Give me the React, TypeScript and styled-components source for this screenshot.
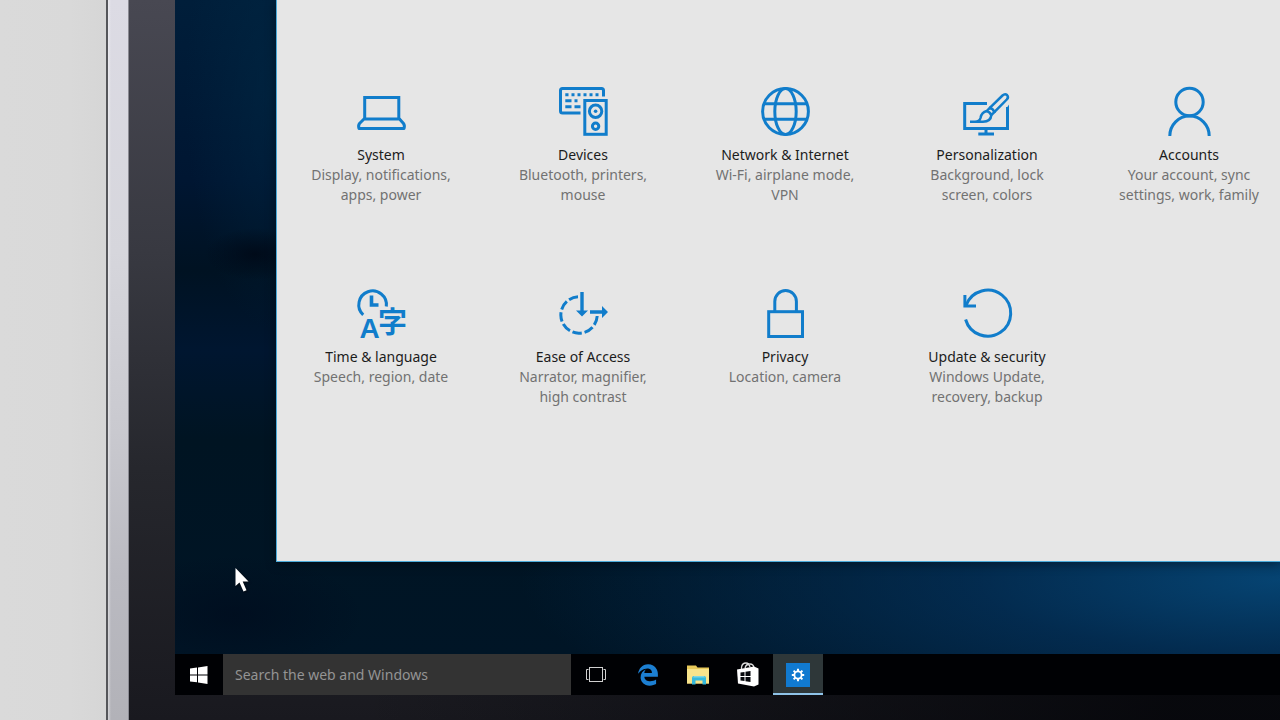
import React from "react";
import styled, { createGlobalStyle } from "styled-components";
import { FaEdgeLegacy } from "react-icons/fa";

const fontStack = '"Noto Sans", "Open Sans", "Noto Sans CJK JP", sans-serif';

const GlobalStyle = createGlobalStyle`
  *, *::before, *::after { box-sizing: border-box; }
  body { margin: 0; font-family: ${fontStack}; background: #d9d9d9; }
`;

const Scene = styled.div`
  position: relative;
  display: flex;
  min-height: 100vh;
  overflow: hidden;
  padding-left: 106px;
  background: linear-gradient(90deg, #dadada 0, #d9d9d9 70px, #d6d6d6 104px);
`;

const MetalEdge = styled.div`
  flex: none;
  width: 23px;
  border-left: 2px solid #55565a;
  border-right: 1px solid #8a8a92;
  background:
    linear-gradient(90deg, rgba(255, 255, 255, 0.45) 0, rgba(255, 255, 255, 0) 3px),
    linear-gradient(180deg, #dcdbe4 0%, #d6d6dc 35%, #c9c9cf 60%, #babac1 80%, #b2b2b8 100%);
`;

const Bezel = styled.div`
  flex: 1;
  min-width: 0;
  display: flex;
  padding: 0 0 25px 46px;
  background:
    linear-gradient(90deg, rgba(3, 4, 8, 0) 0, rgba(3, 4, 8, 0) 20%, rgba(3, 4, 8, 0.8) 90%),
    linear-gradient(180deg, #484852 0%, #383941 35%, #26272d 65%, #19191f 100%);
`;

const Screen = styled.div`
  flex: 1;
  min-width: 0;
  display: flex;
  flex-direction: column;
`;

const Desktop = styled.main`
  flex: 1;
  padding: 0 0 91px 101px;
  background:
    radial-gradient(ellipse 50px 26px at 80px 254px, rgba(0, 6, 18, 0.7), rgba(0, 6, 18, 0) 100%),
    radial-gradient(ellipse 90px 240px at 100px 90px, rgba(0, 40, 68, 0.6), rgba(0, 40, 68, 0) 100%),
    radial-gradient(ellipse 760px 190px at 100% 580px, rgba(6, 70, 118, 0.95), rgba(4, 52, 96, 0.7) 40%, rgba(2, 30, 60, 0) 100%),
    radial-gradient(ellipse 130px 60px at 60px 615px, rgba(0, 8, 26, 0.5), rgba(0, 8, 26, 0) 100%),
    linear-gradient(180deg, #001e3a 0, #001632 180px, #001222 270px, #001630 350px, #001422 440px, #001526 655px);
`;

const SettingsWindow = styled.section`
  padding: 87px 0 154px 28px;
  border-left: 1px solid #4cabda;
  border-bottom: 1px solid #4cabda;
  background: #e6e6e6;
  box-shadow: 0 2px 10px rgba(0, 0, 0, 0.4);
`;

const CategoryGrid = styled.nav`
  display: grid;
  grid-template-columns: repeat(auto-fill, 152px);
  gap: 84px 50px;
`;

const Tile = styled.a`
  display: flex;
  flex-direction: column;
  align-items: center;
  color: #727272;
  font-size: 14px;
  line-height: 20px;
  text-align: center;
  text-decoration: none;
`;

const TileIcon = styled.svg`
  width: 49px;
  height: 49px;
  margin-bottom: 9px;
  overflow: visible;
  fill: none;
  stroke: #117dcb;
  stroke-width: 3;
`;

const SolidText = styled.text`
  fill: #117dcb;
  stroke: none;
  font-weight: 700;
`;

const TileName = styled.span`
  color: #1c1c1c;
`;

const Taskbar = styled.footer`
  display: flex;
  height: 41px;
  background: #000104;
`;

const TaskButton = styled.button<{ $width?: number; $active?: boolean }>`
  flex: none;
  display: flex;
  align-items: center;
  justify-content: center;
  width: ${(p) => p.$width ?? 50}px;
  padding: ${(p) => (p.$active ? "2px 0 0" : "0")};
  border: 0;
  border-bottom: ${(p) => (p.$active ? "2px solid #8fc3e8" : "0")};
  background: ${(p) => (p.$active ? "#2e3739" : "transparent")};
  color: #fff;
`;

const TaskViewButton = styled(TaskButton)`
  padding-right: 2px;
`;

const SearchBox = styled.input`
  flex: none;
  width: 348px;
  padding: 0 12px;
  border: 0;
  background: #333333;
  color: #ddd;
  font-family: ${fontStack};
  font-size: 14px;
  &::placeholder { color: #949494; opacity: 1; }
`;

const SettingsBadge = styled.span`
  display: flex;
  align-items: center;
  justify-content: center;
  width: 24px;
  height: 24px;
  background: #117ad0;
`;

const Cursor = styled.svg`
  position: absolute;
  left: 235px;
  top: 567px;
  width: 14px;
  height: 26px;
  filter: drop-shadow(1px 1px 1px rgba(0, 0, 0, 0.6));
`;

const categories: { name: string; detail: string; icon: React.ReactNode }[] = [
  {
    name: "System",
    detail: "Display, notifications, apps, power",
    icon: (
      <>
        <path d="M7.7 32V10.5H41.8V32" />
        <path d="M7 32H42.500L46.500 36.500Q48 38.500 47 41.500H2Q1 38.500 2.500 36.500Z" strokeLinejoin="round" />
      </>
    ),
  },
  {
    name: "Devices",
    detail: "Bluetooth, printers, mouse",
    icon: (
      <>
        <path d="M21.500 26H3.500Q1.500 26 1.500 24V3.500Q1.500 1.500 3.500 1.500H42.500Q44.500 1.500 44.500 3.500V9.500" />
        <path d="M6.300 7.800H9.500M12.500 7.800H15.500M18.500 7.800H21.500M24.500 7.800H27.500M30.500 7.800H33.500M36.500 7.800H39.500M6.300 13.800H12.500M15.500 13.800H18.500M6.300 19.800H12.500M15.500 19.800H21.500" />
        <rect x="25.800" y="13.500" width="21.400" height="33.800" />
        <circle cx="36.600" cy="24.300" r="6.200" />
        <circle cx="36.600" cy="24.300" r="1.800" fill="#117dcb" stroke="none" />
        <circle cx="36.600" cy="39.300" r="3.200" />
      </>
    ),
  },
  {
    name: "Network & Internet",
    detail: "Wi-Fi, airplane mode, VPN",
    icon: (
      <>
        <circle cx="24.500" cy="24.500" r="22.900" />
        <ellipse cx="24.500" cy="24.500" rx="10.700" ry="22.900" />
        <path d="M3 16.700H46M3 32.200H46" />
      </>
    ),
  },
  {
    name: "Personalization",
    detail: "Background, lock screen, colors",
    icon: (
      <>
        <path d="M24 16.500H1.700V41.500H44.500V20" />
        <path d="M43 22L46 17.500V24Z" fill="#117dcb" stroke="none" />
        <path d="M23 42V46M15.300 47H31" />
        <g strokeWidth="2.500">
          <path d="M26.800 20.800L39.500 8.500Q42 6.200 44 8Q46 10.200 43.800 12.500L31.300 25.200" />
          <path d="M26.800 20.800Q30 21.500 31.300 25.200L28.300 28.200Q26.800 24.800 23.800 24Z" />
          <path d="M23.800 24C19 25 18 28 17.500 31Q16.500 34.700 12 34.700H7M12 34.700H20C25 34.700 28 32.500 28.300 28.200" />
        </g>
      </>
    ),
  },
  {
    name: "Accounts",
    detail: "Your account, sync settings, work, family",
    icon: (
      <>
        <circle cx="24.500" cy="15" r="13.700" />
        <path d="M4.800 49A19.700 20 0 0 1 44.200 49" />
      </>
    ),
  },
  {
    name: "Time & language",
    detail: "Speech, region, date",
    icon: (
      <>
        <path d="M6.200 25.800A13.800 13.800 0 1 1 29.300 17.500" />
        <path d="M14.500 6.500V16H21.500" strokeWidth="3.600" />
        <SolidText x="2.500" y="48.500" fontSize="28" fontFamily="Liberation Sans">A</SolidText>
        <SolidText x="21" y="43.500" fontSize="29" fontFamily="Noto Sans CJK JP">字</SolidText>
      </>
    ),
  },
  {
    name: "Ease of Access",
    detail: "Narrator, magnifier, high contrast",
    icon: (
      <>
        <path d="M38.200 27A18.200 18.200 0 1 1 19 7.800" pathLength="86" strokeDasharray="9.800 2.900" />
        <path d="M23 3V24M31 23H44" strokeWidth="3.400" />
        <path d="M17 21.500H29L23 27.500ZM43 17L49 23L43 29Z" fill="#117dcb" stroke="none" />
      </>
    ),
  },
  {
    name: "Privacy",
    detail: "Location, camera",
    icon: (
      <>
        <rect x="7.700" y="22.700" width="33.800" height="24.800" />
        <path d="M13.800 22V12.500A10.800 11 0 0 1 35.400 12.500V22" />
      </>
    ),
  },
  {
    name: "Update & security",
    detail: "Windows Update, recovery, backup",
    icon: (
      <>
        <path d="M2.600 30.500A23 23 0 1 0 3.200 16" />
        <path d="M1.900 6V16.900H13" />
      </>
    ),
  },
];

const gearAngles = [0, 45, 90, 135, 180, 225, 270, 315];

export default function App() {
  return (
    <>
      <GlobalStyle />
      <Scene>
        <MetalEdge />
        <Bezel>
          <Screen>
            <Desktop>
              <SettingsWindow aria-label="Settings">
                <CategoryGrid>
                  {categories.map((c) => (
                    <Tile href="#" key={c.name}>
                      <TileIcon viewBox="0 0 49 49" aria-hidden="true">{c.icon}</TileIcon>
                      <TileName>{c.name}</TileName>
                      <span>{c.detail}</span>
                    </Tile>
                  ))}
                </CategoryGrid>
              </SettingsWindow>
            </Desktop>
            <Taskbar>
              <TaskButton $width={48} aria-label="Start">
                <svg width="18" height="18" viewBox="0 0 18 18" fill="#fff">
                  <path d="M0 2.600L7 1.600V8.500H0ZM8 1.400L17.500 0V8.500H8ZM0 9.500H7V16.300L0 15.400ZM8 9.500H17.500V18L8 16.500Z" />
                </svg>
              </TaskButton>
              <SearchBox type="text" placeholder="Search the web and Windows" aria-label="Search the web and Windows" />
              <TaskViewButton $width={52} aria-label="Task View">
                <svg width="20" height="16" viewBox="0 0 20 16" fill="none" stroke="#d0d0d0">
                  <rect x="3.500" y="0.500" width="13" height="14" />
                  <path d="M2.500 2.500H0.500V12.500H2.500M17.500 2.500H19.500V12.500H17.500" />
                </svg>
              </TaskViewButton>
              <TaskButton aria-label="Microsoft Edge">
                <FaEdgeLegacy size={22} color="#1c7fd2" />
              </TaskButton>
              <TaskButton aria-label="File Explorer">
                <svg width="23" height="20" viewBox="0 0 23 20">
                  <path d="M0 0.500H9L10.500 2.500H22V18.500H0Z" fill="#e8c95a" />
                  <path d="M1 4H22V18.500H0V4Z" fill="#f7e38c" />
                  <path d="M5 19.500V13Q5 11 7 11H17Q19 11 19 13V19.500H15.500V15.500H8.500V19.500Z" fill="#35b9dc" />
                  <path d="M6 12.500L7 11H17L18 12.500Z" fill="#7bd6e6" />
                </svg>
              </TaskButton>
              <TaskButton aria-label="Store">
                <svg width="22" height="25" viewBox="0 0 22 25">
                  <path d="M4.500 7V5.500Q5 1 9 1Q12 1 13 5M8 6Q9 2 13 2Q16.500 2 17 6" fill="none" stroke="#ddd" strokeWidth="1.300" />
                  <path d="M0 7.500L17 4.500L21.500 6.500V22.500L17 24.500L1 21.500Z" fill="#fff" />
                  <path d="M3.500 10.500L7.500 10V14H3.500ZM8.500 9.800L13.500 9V14H8.500ZM3.500 15H7.500V19L3.500 18.400ZM8.500 15H13.500V20L8.500 19.200Z" fill="#06080c" />
                </svg>
              </TaskButton>
              <TaskButton $active aria-label="Settings">
                <SettingsBadge>
                  <svg width="14" height="14" viewBox="-7 -7 14 14" fill="none" stroke="#fff">
                    <circle r="3.600" strokeWidth="1.800" />
                    {gearAngles.map((a) => (
                      <path key={a} d="M0 -4V-6.200" strokeWidth="2" transform={`rotate(${a})`} />
                    ))}
                  </svg>
                </SettingsBadge>
              </TaskButton>
            </Taskbar>
          </Screen>
        </Bezel>
        <Cursor viewBox="0 0 14 26" aria-hidden="true">
          <path d="M0.500 1V19L4.500 15.500L8.500 24.500L11.500 23.200L7.700 14.500H13.500Z" fill="#fff" />
        </Cursor>
      </Scene>
    </>
  );
}
